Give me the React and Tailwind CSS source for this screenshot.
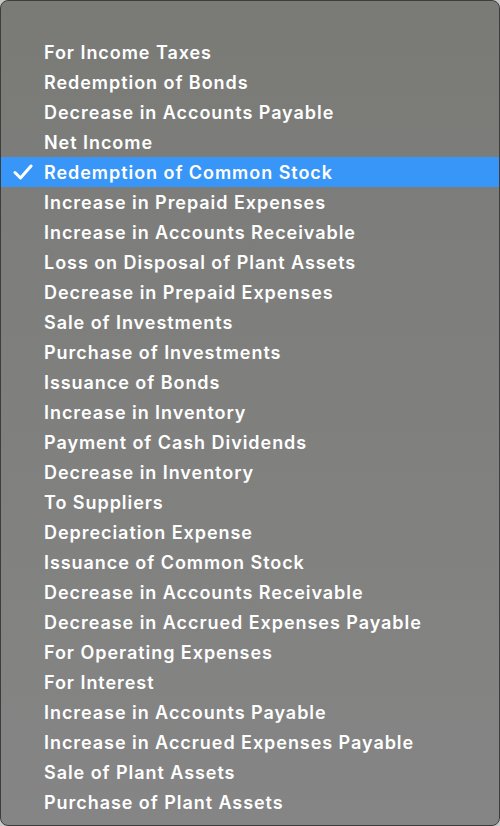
import React from 'react';

const items = [
  'For Income Taxes',
  'Redemption of Bonds',
  'Decrease in Accounts Payable',
  'Net Income',
  'Redemption of Common Stock',
  'Increase in Prepaid Expenses',
  'Increase in Accounts Receivable',
  'Loss on Disposal of Plant Assets',
  'Decrease in Prepaid Expenses',
  'Sale of Investments',
  'Purchase of Investments',
  'Issuance of Bonds',
  'Increase in Inventory',
  'Payment of Cash Dividends',
  'Decrease in Inventory',
  'To Suppliers',
  'Depreciation Expense',
  'Issuance of Common Stock',
  'Decrease in Accounts Receivable',
  'Decrease in Accrued Expenses Payable',
  'For Operating Expenses',
  'For Interest',
  'Increase in Accounts Payable',
  'Increase in Accrued Expenses Payable',
  'Sale of Plant Assets',
  'Purchase of Plant Assets',
];

const selected = 'Redemption of Common Stock';

const App = () => {
  return (
    <div className="w-[500px] h-[826px] bg-[#c9c9c9] overflow-hidden">
      <div
        className="w-[500px] h-[826px] rounded-lg border border-[#3d3d3d] bg-gradient-to-b from-[#7a7b77] to-[#858585] pt-[36px] overflow-hidden"
        style={{ fontFamily: 'Inter, "Liberation Sans", sans-serif' }}
      >
        {items.map((item) => {
          const isSel = item === selected;
          return (
            <div
              key={item}
              className={`h-[30px] flex items-center text-white text-[18px] font-semibold tracking-[0.95px] ${
                isSel ? 'bg-[#3996f9]' : ''
              }`}
            >
              <div className="w-[43px] flex justify-center pl-[1px]">
                {isSel && (
                  <svg width="20" height="16" viewBox="0 0 20 16" fill="none">
                    <path
                      d="M2 8.5 L7.5 14 L18 2"
                      stroke="white"
                      strokeWidth="3"
                      strokeLinecap="round"
                      strokeLinejoin="round"
                    />
                  </svg>
                )}
              </div>
              <span className="leading-none pt-[2px]">{item}</span>
            </div>
          );
        })}
      </div>
    </div>
  );
};

export default App;
